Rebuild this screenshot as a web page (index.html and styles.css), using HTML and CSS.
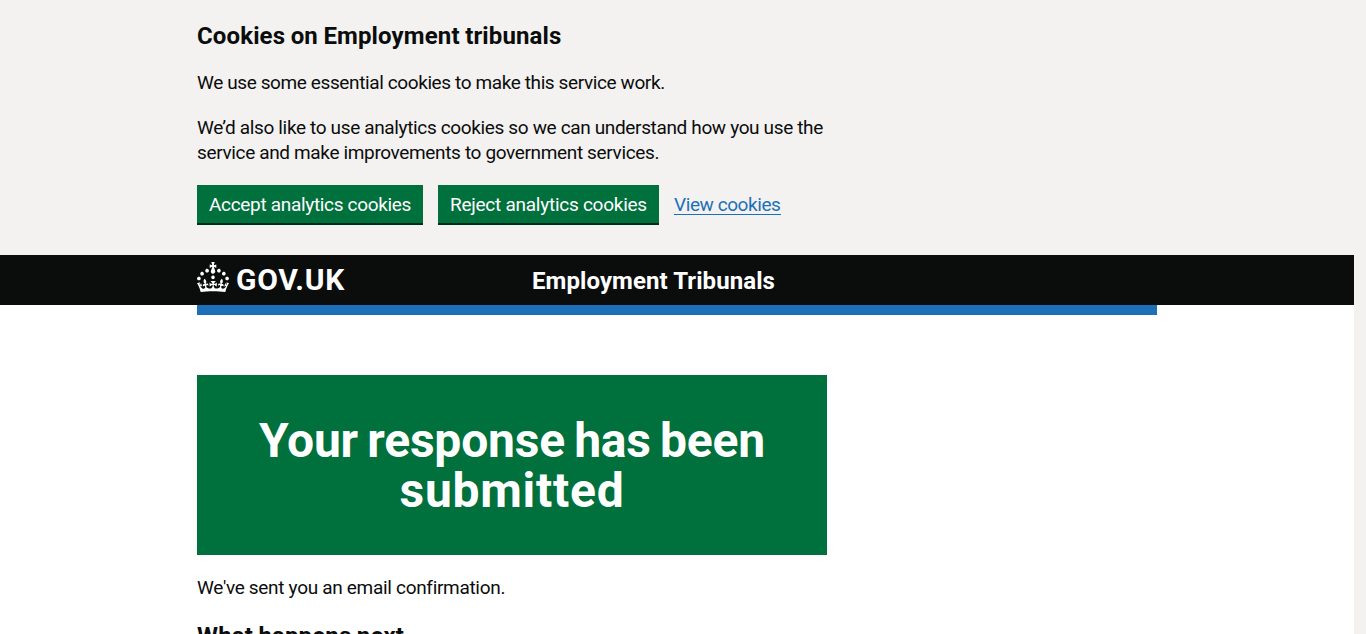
FILE: index.html
```html
<!DOCTYPE html>
<html lang="en">
<head>
<meta charset="utf-8">
<title>Your response has been submitted</title>
<link rel="stylesheet" href="styles.css">
</head>
<body>
<section class="cookie-banner">
  <div class="container">
    <h2 class="heading-m"><span class="t-heading">Cookies on Employment tribunals</span></h2>
    <p class="body-text"><span class="t-essential">We use some essential cookies to make this service work.</span></p>
    <p class="body-text"><span class="t-analytics">We’d also like to use analytics cookies so we can understand how you use the</span><br><span class="t-analytics">service and make improvements to government services.</span></p>
    <div class="button-group">
      <button class="button button-accept"><span class="t-accept">Accept analytics cookies</span></button>
      <button class="button button-reject"><span class="t-reject">Reject analytics cookies</span></button>
      <a class="link" href="#">View cookies</a>
    </div>
  </div>
</section>
<header class="header">
  <div class="container header-inner">
    <a class="logo" href="#">
      <svg class="crown" viewBox="0 0 32 30" width="32" height="30" fill="currentColor" aria-hidden="true"><path d="M22.6 10.4c-1 .4-2-.1-2.4-1-.4-.9.1-2 1-2.4.9-.4 2 .1 2.4 1s-.1 2-1 2.4m-5.9 6.7c-.9.4-2-.1-2.4-1-.4-.9.1-2 1-2.4.9-.4 2 .1 2.4 1s-.1 2-1 2.4m10.8-3.7c-1 .4-2-.1-2.4-1-.4-.9.1-2 1-2.4.9-.4 2 .1 2.4 1s0 2-1 2.4m3.3 4.8c-1 .4-2-.1-2.4-1-.4-.9.1-2 1-2.4.9-.4 2 .1 2.4 1s-.1 2-1 2.4M17 4.7l2.3 1.2V2.5l-2.3.7-.2-.2.9-3h-3.4l.9 3-.2.2c-.1.1-2.3-.7-2.3-.7v3.4L15 4.7c.1.1.1.2.2.2l-1.3 4c-.1.2-.1.4-.1.6 0 1.1.8 2 1.9 2.2h.7c1-.2 1.9-1.1 1.9-2.1 0-.2 0-.4-.1-.6l-1.3-4c-.1-.2 0-.2.1-.3m-7.6 5.7c.9.4 2-.1 2.4-1 .4-.9-.1-2-1-2.4-.9-.4-2 .1-2.4 1s0 2 1 2.4m-5 3c.9.4 2-.1 2.4-1 .4-.9-.1-2-1-2.4-.9-.4-2 .1-2.4 1s.1 2 1 2.4m-3.2 4.8c.9.4 2-.1 2.4-1 .4-.9-.1-2-1-2.4-.9-.4-2 .1-2.4 1s0 2 1 2.4m14.8 11c4.4 0 8.6.3 12.3.8 1.1-4.5 2.4-7 3.7-8.8l-2.5-.9c.2 1.3.3 1.9 0 2.7-.4-.4-.8-1.1-1.1-2.3l-1.2 4c.7-.5 1.3-.8 2-.9-1.1 2.5-2.6 3.1-3.5 3-1.1-.2-1.7-1.2-1.5-2.1.3-1.2 1.5-1.5 2.1-.1 1.1-2.3-.8-3-2-2.3 1.9-1.9 2.1-3.5.6-5.6-2.1 1.6-2.1 3.2-1.2 5.5-1.2-1.4-3.2-.6-2.5 1.6.9-1.4 2.1-.5 1.9.8-.2 1.1-1.7 2.1-3.5 1.9-2.7-.2-2.9-2.1-2.9-3.6.7-.1 1.9.5 2.9 1.9l.4-4.3c-1.1 1.1-2.1 1.4-3.2 1.4.4-1.2 2.1-3 2.1-3h-5.4s1.7 1.9 2.1 3c-1.1 0-2.1-.2-3.2-1.4l.4 4.3c1-1.4 2.2-2 2.9-1.9-.1 1.5-.2 3.4-2.9 3.6-1.9.2-3.4-.8-3.5-1.9-.2-1.3 1-2.2 1.9-.8.7-2.3-1.2-3-2.5-1.6.9-2.2.9-3.9-1.2-5.5-1.5 2-1.3 3.7.6 5.6-1.2-.7-3.1 0-2 2.3.6-1.4 1.8-1.1 2.1.1.2.9-.3 1.9-1.5 2.1-.9.2-2.4-.5-3.5-3 .6 0 1.2.3 2 .9l-1.2-4c-.3 1.1-.7 1.9-1.1 2.3-.3-.8-.2-1.4 0-2.7l-2.9.9C1.3 23 2.6 25.5 3.7 30c3.7-.5 7.9-.8 12.3-.8"/></svg>
      <span class="logo-text">GOV.UK</span>
    </a>
    <a class="service-name" href="#">Employment Tribunals</a>
  </div>
</header>
<div class="container">
  <div class="brand-bar"></div>
  <main class="main">
    <div class="panel"><h1 class="panel-title"><span class="t-title-first">Your response has been</span><br><span class="t-title-second">submitted</span></h1></div>
    <p class="body-text"><span class="t-email">We've sent you an email confirmation.</span></p>
    <h2 class="heading-m"><span class="t-heading">What happens next</span></h2>
  </main>
</div>
</body>
</html>
```
FILE: styles.css
```css
* { box-sizing: border-box; }
html { background: #f3f2f1; height: 100%; overflow: hidden; }
body { margin: 0; width: 1354px; height: 634px; overflow: hidden; background: #fff; color: #0b0c0c; font-family: Roboto, "Noto Sans", sans-serif; font-size: 19px; line-height: 25px; white-space: nowrap; }
.container { width: 960px; margin: 0 auto; }
.cookie-banner { height: 255px; padding-top: 20px; background: #f3f2f1; }
.heading-m { margin: 0 0 18px; font-size: 24px; line-height: 32px; font-weight: 700; }
.body-text { margin: 0 0 20px; }
.button-group { display: flex; align-items: flex-start; gap: 15px; }
.button { height: 38px; margin: 0; padding: 1px 12px 0; border: 0; background: #00703c; color: #fff; font: inherit; line-height: 37px; box-shadow: 0 2px 0 #002d18; text-align: left; white-space: nowrap; }
.button-accept { width: 226px; }
.button-reject { width: 221px; }
.link { height: 29px; margin-top: 1px; line-height: 37px; color: #1d70b8; text-decoration: none; border-bottom: 1px solid #1d70b8; letter-spacing: -0.42px; }
.t-heading { letter-spacing: 0.13px; word-spacing: -0.6px; }
.t-essential { letter-spacing: -0.39px; }
.t-analytics { letter-spacing: -0.355px; }
.t-accept { letter-spacing: -0.32px; }
.t-reject { letter-spacing: -0.26px; }
.t-email { letter-spacing: -0.31px; }
.header { height: 50px; background: #0b0c0c; color: #fff; }
.header-inner { display: flex; }
.logo { display: flex; width: 335px; padding-top: 7px; color: #fff; text-decoration: none; }
.crown { display: block; flex: none; }
.logo-text { margin-left: 7px; font-size: 30px; line-height: 36px; font-weight: 700; letter-spacing: 0.7px; }
.service-name { padding-top: 11px; font-size: 24px; line-height: 30px; font-weight: 700; letter-spacing: 0.08px; color: #fff; text-decoration: none; }
.brand-bar { height: 10px; background: #1d70b8; }
.main { padding-top: 60px; }
.panel { width: 630px; height: 180px; margin-bottom: 20px; padding-top: 41px; background: #00703c; color: #fff; text-align: center; }
.panel-title { margin: 0; font-size: 48px; line-height: 50px; font-weight: 700; }
.t-title-first { letter-spacing: -0.2px; word-spacing: -2.5px; }
.t-title-second { letter-spacing: 0.75px; }
```
